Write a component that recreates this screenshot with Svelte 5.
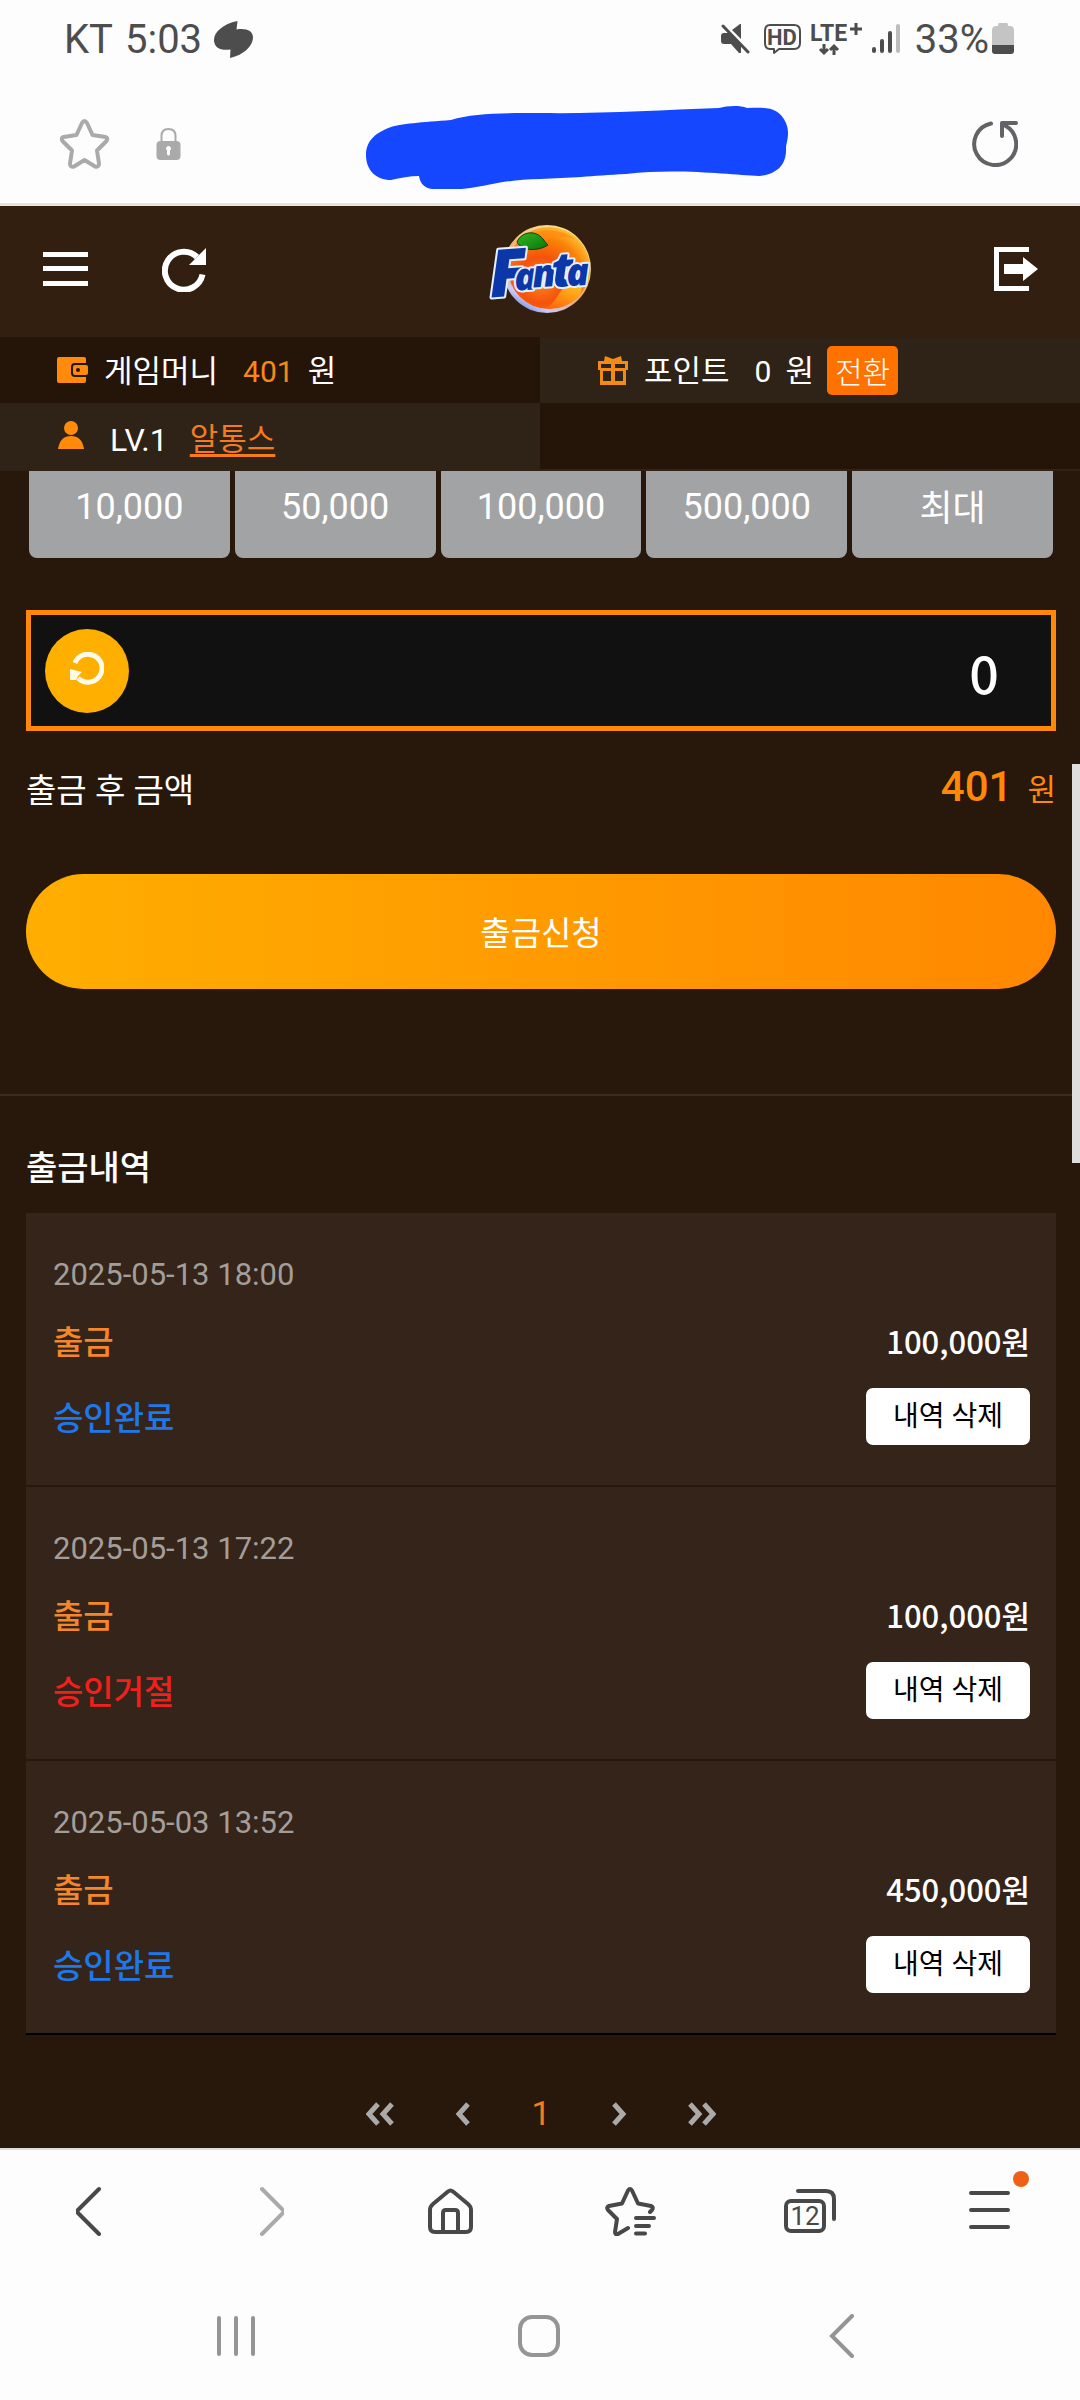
<script lang="ts">
  const amounts = ['10,000', '50,000', '100,000', '500,000', '최대'];
  const history = [
    { date: '2025-05-13 18:00', amount: '100,000원', status: '승인완료', ok: true },
    { date: '2025-05-13 17:22', amount: '100,000원', status: '승인거절', ok: false },
    { date: '2025-05-03 13:52', amount: '450,000원', status: '승인완료', ok: true }
  ];
  let amount = $state('0');
</script>

<div class="screen">
  <div class="status">
    <div class="status-left">
      <span>KT</span>
      <span>5:03</span>
      <svg width="40" height="38" viewBox="211 20 40 38" aria-hidden="true">
        <path fill="#4d4d4d" d="M234.500 21C220 24 211 32 211 40c0 8 7 11 16.500 9.500L227 58c14-3 23-12.500 23-20.500 0-7-7-9.500-16.500-8z" />
      </svg>
    </div>
    <div class="status-right">
      <svg class="mute" width="30" height="32" viewBox="720 23 30 32" aria-hidden="true">
        <path fill="#4d4d4d" d="M724 33h6l11 11v9h-2l-8-9h-7q-3 0-3-3v-5q0-3 3-3zM732 30l8-6h1v15z" />
        <path stroke="#4d4d4d" stroke-width="3" stroke-linecap="round" d="M723 26l25 26" />
      </svg>
      <svg width="38" height="32" viewBox="763 23 38 32" aria-hidden="true">
        <path fill="none" stroke="#4d4d4d" stroke-width="2" stroke-linejoin="round" d="M770 25h24q6 0 6 6v12q0 6-6 6h-15l-5 4v-4h-4q-5 0-5-6V31q0-6 5-6z" />
        <text x="782" y="45" text-anchor="middle" class="hd">HD</text>
      </svg>
      <svg width="54" height="52" viewBox="809 12 54 52" aria-hidden="true">
        <text x="810" y="40" class="lte">LTE</text>
        <path fill="none" stroke="#4d4d4d" stroke-width="3" d="M850 28h12M856 22v12" />
        <path fill="none" stroke="#4d4d4d" stroke-width="3" d="M824 43v9M820 48l4 4 4-4M834 54v-9M830 49l4-4 4 4" />
      </svg>
      <svg class="signal" width="30" height="32" viewBox="871 23 30 32" fill="none" stroke="#4d4d4d" stroke-width="4" stroke-linecap="round" aria-hidden="true">
        <path d="M874 49v2M882 41v10M890 33v18" />
        <path stroke="#bdbdbd" d="M898 26v25" />
      </svg>
      <span class="percent">33%</span>
      <svg width="22" height="32" viewBox="992 23 22 32" aria-hidden="true">
        <path fill="#c4c4c4" d="M999 23h8q1 0 1 3h3q3 1 3 4v16h-22V30q0-3 3-4h3q0-3 1-3z" />
        <path fill="#4d4d4d" d="M992 45h22v6q0 3-3 3h-16q-3 0-3-3z" />
      </svg>
    </div>
  </div>

  <div class="address">
    <div class="address-left">
      <button aria-label="즐겨찾기">
        <svg width="50" height="50" viewBox="60 119 50 50" fill="none" stroke="#aaa" stroke-width="4" stroke-linejoin="round">
          <path d="M82 123q2.500-4 5 0l5.500 12 13 2q3 1 1 4l-9.500 9.500 2 13q0 4-4 3L84.500 160 74 166.500q-4 1-4-3l2-13-9.500-9.500q-2-3 1-4l13-2z" />
        </svg>
      </button>
      <svg width="25" height="34" viewBox="156 126 25 34" aria-hidden="true">
        <path fill="none" stroke="#aaa" stroke-width="2" d="M161.500 142v-7q0-7 7-7t7 7v7" />
        <rect x="156.500" y="140" width="24" height="19" rx="4" fill="#aaa" />
        <path fill="#fff" d="M168.500 145a2.500 2.500 0 0 1 1.500 4.500v4q-1.500 2-3 0v-4a2.500 2.500 0 0 1 1.500-4.500z" />
      </svg>
    </div>
    <svg width="424" height="96" viewBox="365 96 424 96" aria-hidden="true">
      <path fill="#1447ff" d="M366 155c0-15 11-23 25-28 8-3 32-5 60-7 22-7 50-7 89-7 60 1 120-3 179-5 8-2 20-3 28 0 22-1 32 0 39 15 4 10 1 17 0 24 1 18-9 27-27 29-28-1-80-8-133-2-35 2-56 4-86 5-36 0-58 9-79 10h-29c-8-1-12-6-13-13-9 0-19 2-28 4-15 0-25-10-25-25z" />
    </svg>
    <button aria-label="새로고침">
      <svg width="46" height="46" viewBox="972 121 46 46" fill="none" stroke="#626366" stroke-width="4" stroke-linecap="round" stroke-linejoin="round">
        <path d="M991 123.500A21 21 0 1 0 1005 125.500M1016 123h-14v13" />
      </svg>
    </button>
  </div>

  <header class="site-header">
    <div class="header-left">
      <button aria-label="메뉴">
        <svg width="45" height="34" viewBox="0 0 45 34" fill="#fff"><path d="M0 0h45v5H0zM0 14h45v5H0zM0 29h45v5H0z" /></svg>
      </button>
      <button aria-label="페이지 새로고침">
        <svg width="45" height="45" viewBox="162 246 45 45">
          <path fill="none" stroke="#fff" stroke-width="6" d="M202.500 273.500A19 19 0 1 1 197 256" />
          <path fill="#fff" d="M206 247v17h-17z" />
        </svg>
      </button>
    </div>
    <a href="#home" aria-label="Fanta">
      <svg class="logo" width="104" height="92" viewBox="19 14 104 92">
        <defs>
          <radialGradient id="orange" cx="0.400" cy="0.650" r="0.700">
            <stop offset="0" stop-color="#ff8a1e" />
            <stop offset="0.400" stop-color="#f4520c" />
            <stop offset="0.750" stop-color="#fb8407" />
            <stop offset="1" stop-color="#ffc63a" />
          </radialGradient>
          <linearGradient id="rim" x1="0.800" y1="0" x2="0.200" y2="1">
            <stop offset="0" stop-color="#ffe9a0" />
            <stop offset="0.600" stop-color="#f0a56a" />
            <stop offset="0.850" stop-color="#c9ccf5" />
            <stop offset="1" stop-color="#5c74dc" />
          </linearGradient>
          <linearGradient id="leaf" x1="0" y1="0" x2="1" y2="1">
            <stop offset="0" stop-color="#35b51c" />
            <stop offset="1" stop-color="#06760c" />
          </linearGradient>
          <linearGradient id="drop" x1="0.800" y1="0" x2="0.200" y2="1">
            <stop offset="0" stop-color="#ffc21c" />
            <stop offset="1" stop-color="#ff6a0c" />
          </linearGradient>
        </defs>
        <ellipse cx="77" cy="60" rx="44" ry="44" fill="url(#rim)" />
        <ellipse cx="79" cy="59" rx="41" ry="41" fill="url(#orange)" />
        <path d="M50 32c12-12 38-15 55-2-14-4-26-3-34 4-8 3-16 2-21-2z" fill="#ff8a10" opacity="0.700" />
        <path d="M76 99c11-4 13-22 25-25 10-2 14 6 7 14-8 8-20 12-32 11z" fill="url(#drop)" />
        <path d="M47 33c4-10 18-13 26-3 2 3 4 5 5 6-9 6-26 7-31-3z" fill="url(#leaf)" stroke="#14380c" stroke-width="1" />
        <g class="wordmark" transform="rotate(-4 70 65)">
          <text x="19" y="85" class="cap">F</text>
          <text x="44" y="80" class="mid">a</text>
          <text x="62" y="78" class="mid">n</text>
          <text x="82" y="79" class="tee">t</text>
          <text x="96" y="79" class="mid">a</text>
        </g>
      </svg>
    </a>
    <button class="logout" aria-label="로그아웃">
      <svg width="44" height="44" viewBox="0 0 44 44" fill="#fff">
        <path d="M0 0h35v5H5v34h30v5H0zM10 17h19v-7l15 12-15 12v-7H10z" />
      </svg>
    </button>
  </header>

  <section class="info">
    <div class="cell dark">
      <svg width="31" height="26" viewBox="0 0 31 26" aria-hidden="true">
        <path fill="#ff8a0c" d="M2 0h25q2 0 2 2v4H18q-4 0-4 4v6q0 4 4 4h11v4q0 2-2 2H2q-2 0-2-2V2q0-2 2-2z" />
        <path fill="#ff8a0c" d="M18 8h11q2 0 2 2v6q0 2-2 2H18q-2 0-2-2v-6q0-2 2-2z" />
        <circle cx="21" cy="13" r="2" fill="#251509" />
      </svg>
      <span class="label">게임머니</span>
      <span class="value orange">401</span>
      <span>원</span>
    </div>
    <div class="cell light">
      <svg width="30" height="29" viewBox="0 0 30 29" aria-hidden="true">
        <path fill="#f28a18" fill-rule="evenodd" d="M7 0l8 3 8-3 1 5h6v9h-2v15H2V14H0V5h6zM3 8v4h10V8zM17 8v4h10V8zM5 15v10h8V15zM17 15v10h8V15z" />
      </svg>
      <span class="label">포인트</span>
      <span class="value">0</span>
      <span>원</span>
      <button class="convert">전환</button>
    </div>
    <div class="cell light member">
      <svg width="31" height="32" viewBox="0 0 31 32" fill="#ff8a0c" aria-hidden="true">
        <circle cx="14" cy="7" r="7" /><path d="M1 28q2-13 13-13t13 13z" />
      </svg>
      <span class="level">LV.1</span>
      <a class="user" href="#profile">알통스</a>
    </div>
    <div class="cell dark empty"></div>
  </section>

  <main>
    <div class="amounts">
      {#each amounts as a}
        <button>{a}</button>
      {/each}
    </div>

    <div class="entry">
      <button class="reset" aria-label="초기화">
        <svg width="34" height="34" viewBox="0 0 34 34">
          <path fill="none" stroke="#fffbe8" stroke-width="5" d="M5 11A14 14 0 1 1 8 26" />
          <path fill="#fffbe8" d="M0 17l12 3-4 4-2 4H0z" />
        </svg>
      </button>
      <input type="text" inputmode="numeric" aria-label="출금 금액" bind:value={amount} />
    </div>

    <div class="after">
      <span class="after-label">출금 후 금액</span>
      <span class="after-value"><strong>401</strong><span>원</span></span>
    </div>

    <button class="submit">출금신청</button>

    <hr />

    <h2>출금내역</h2>
    <ul class="history">
      {#each history as h}
        <li>
          <time>{h.date}</time>
          <div class="row kind"><span class="type">출금</span><span class="sum">{h.amount}</span></div>
          <div class="row state">
            <span class={h.ok ? 'done' : 'denied'}>{h.status}</span>
            <button>내역 삭제</button>
          </div>
        </li>
      {/each}
    </ul>

    <nav class="pages" aria-label="페이지">
      <button aria-label="처음">
        <svg width="29" height="24" viewBox="0 0 29 24"><path d="M12 2L3 12l9 10M26 2l-9 10 9 10" /></svg>
      </button>
      <button aria-label="이전">
        <svg width="16" height="24" viewBox="0 0 16 24"><path d="M13 2L4 12l9 10" /></svg>
      </button>
      <a href="#page-1" aria-current="page">1</a>
      <button aria-label="다음">
        <svg width="16" height="24" viewBox="0 0 16 24"><path d="M3 2l9 10-9 10" /></svg>
      </button>
      <button aria-label="마지막">
        <svg width="29" height="24" viewBox="0 0 29 24"><path d="M3 2l9 10-9 10M17 2l9 10-9 10" /></svg>
      </button>
    </nav>
    <div class="scrollbar"></div>
  </main>

  <nav class="browser-bar" aria-label="브라우저">
    <button aria-label="뒤로">
      <svg width="28" height="50" viewBox="76 2186 28 50"><path d="M99 2189l-21 21q-1.500 1.500 0 3l21 21" /></svg>
    </button>
    <button aria-label="앞으로" class="faded">
      <svg width="28" height="50" viewBox="256 2186 28 50"><path d="M262 2189l21 21q1.500 1.500 0 3l-21 21" /></svg>
    </button>
    <button aria-label="홈">
      <svg width="46" height="50" viewBox="427 2186 46 50">
        <path d="M448 2191.500q2.500-2 5 0l15 12.500q3 2.500 3 6v17q0 5-5 5h-31q-5 0-5-5v-17q0-3.500 3-6zM443 2231v-18q0-3 3-3h9q3 0 3 3v18" />
      </svg>
    </button>
    <button aria-label="북마크">
      <svg width="52" height="50" viewBox="604 2186 52 50">
        <path d="M628 2190.500q2-3 4 0l6 13 13 2.500q3 1 1 4l-2 2M628 2190.500l-6 13-13 2.500q-3 1-1 4l9 9-2 13q0 3 3 2l10-6M636 2218h18M636 2226h13M636 2233.500h9" />
      </svg>
    </button>
    <button aria-label="탭 12개">
      <svg width="54" height="50" viewBox="783 2186 54 50">
        <rect x="786" y="2201" width="38" height="30" rx="5" />
        <path d="M798 2191h28q8 0 8 8v20" />
        <text x="805" y="2225" text-anchor="middle">12</text>
      </svg>
    </button>
    <button aria-label="메뉴" class="more">
      <svg width="44" height="50" viewBox="968 2186 44 50"><path d="M971 2193h37M971 2210h37M971 2227h37" /></svg>
      <span class="dot"></span>
    </button>
  </nav>

  <nav class="system-bar" aria-label="시스템">
    <button aria-label="최근 앱"><svg width="42" height="44" viewBox="0 0 42 44"><path d="M4 4v36M21 4v36M38 4v36" /></svg></button>
    <button aria-label="홈 화면"><svg width="44" height="44" viewBox="0 0 44 44"><rect x="3" y="3" width="38" height="38" rx="12" /></svg></button>
    <button aria-label="뒤로 가기"><svg width="26" height="44" viewBox="0 0 26 44"><path d="M23 2L3 22l20 20" /></svg></button>
  </nav>
</div>

<style>
  :global(body) { margin: 0; background: #fdfdfd; }
  .screen { font-family: Roboto, "Noto Sans CJK KR", sans-serif; background: #fdfdfd; color: #fff; font-size: 30px; }
  svg { display: block; flex: none; }
  button { border: 0; padding: 0; margin: 0; background: none; color: inherit; font: inherit; cursor: pointer; }
  a { color: inherit; }

  .status { display: flex; justify-content: space-between; align-items: center; height: 78px; padding: 0 66px 0 64px; color: #4d4d4d; font-size: 40px; }
  .status-left, .status-right { display: flex; align-items: center; }
  .status-left { gap: 12px; }
  .status-right { gap: 8px; }
  .mute { margin-right: 5px; }
  .signal { margin-right: 6px; }
  .percent { margin-right: -5px; }
  .hd { font-size: 22px; font-weight: 700; fill: #4d4d4d; }
  .lte { font-size: 23px; font-weight: 700; fill: #4d4d4d; }

  .address { display: flex; justify-content: space-between; align-items: center; height: 125px; box-sizing: border-box; padding: 6px 62px 0 60px; }
  .address-left { display: flex; align-items: center; gap: 46px; }

  .site-header { display: grid; grid-template-columns: 1fr auto 1fr; align-items: center; height: 126px; padding: 0 42px 5px 43px; background: #321f0f; border-top: 3px solid #e5e4e1; }
  .header-left { display: flex; align-items: center; gap: 74px; }
  .logout { justify-self: end; }
  .logo { overflow: visible; }
  .wordmark { font-family: "Open Sans", sans-serif; font-weight: 800; font-style: italic; fill: #0b37a8; stroke: #e4efff; stroke-width: 4px; stroke-linejoin: round; paint-order: stroke; }
  .cap { font-size: 66px; }
  .mid { font-size: 38px; }
  .tee { font-size: 48px; }

  .info { display: grid; grid-template-columns: 1fr 1fr; font-size: 31px; line-height: 40px; }
  .cell { display: flex; align-items: center; height: 66px; padding-left: 57px; }
  .cell:nth-child(n + 3) { height: 68px; }
  .cell:nth-child(even) { padding-left: 58px; }
  .cell > span { padding-top: 4px; }
  .dark { background: #251509; }
  .light { background: #2f2217; }
  .empty { box-sizing: border-box; border-bottom: 2px solid #2f2217; }
  .label { margin-left: 16px; }
  .value { margin: 0 14px 0 25px; font-size: 30px; }
  .orange { color: #f78a17; }
  .member > .level, .user { padding-top: 6px; }
  .level { margin: 0 22px 0 22px; font-size: 32px; }
  .user { color: #f57b1c; text-decoration-thickness: 3px; text-underline-offset: 4px; }
  .convert { margin-left: 13px; padding: 0 8px; line-height: 49px; border-radius: 5px; background: #ff7200; font-size: 30px; font-family: "Noto Sans CJK KR", sans-serif; font-weight: 300; }

  main { position: relative; padding: 0 24px 0 26px; background: #27180b; }
  .amounts { display: grid; grid-template-columns: repeat(5, 1fr); gap: 5px; padding: 0 3px; }
  .amounts button { height: 87px; padding-bottom: 16px; border-radius: 0 0 8px 8px; background: #a2a3a4; font-size: 36px; }
  .amounts button:last-child { padding-bottom: 20px; }

  .entry { display: flex; align-items: center; margin-top: 52px; height: 121px; box-sizing: border-box; border: 5px solid #ff8808; background: #111; }
  .reset { display: grid; place-items: center; width: 84px; height: 84px; margin-left: 14px; border-radius: 50%; background: #ffaf00; flex: none; padding-bottom: 4px; box-sizing: border-box; }
  .entry input { flex: 1; min-width: 0; height: 100%; box-sizing: border-box; padding: 2px 52px 0 0; border: 0; outline: 0; background: none; color: #fff; font: 500 52px "Noto Sans CJK KR", sans-serif; text-align: right; }

  .after { display: flex; justify-content: space-between; align-items: center; height: 60px; margin-top: 26px; font-size: 33px; }
  .after-label { padding-top: 2px; }
  .after-value { display: flex; align-items: baseline; gap: 15px; color: #ff8808; font-size: 31px; padding-bottom: 2px; }
  .after-value strong { font-size: 42px; font-weight: 500; }

  .submit { display: block; width: 100%; height: 115px; margin-top: 57px; padding-bottom: 2px; border-radius: 58px; background: linear-gradient(90deg, #ffae00, #ff8800); font-size: 33px; }
  hr { height: 2px; margin: 105px -16px 0 -26px; border: 0; background: #3b2a20; }
  h2 { margin: 47px 0 20px; font-size: 34px; line-height: 50px; font-weight: 500; }

  .history { margin: 0; padding: 0; list-style: none; }
  .history li { padding: 40px 26px 40px 27px; background: #342419; border-bottom: 2px solid #27180b; }
  .history li:last-child { border-bottom-color: #000; }
  time { display: block; font-size: 31px; line-height: 44px; color: #a39e99; }
  .row { display: flex; justify-content: space-between; align-items: center; font-size: 33px; font-weight: 500; }
  .kind { height: 46px; margin-top: 20px; }
  .state { height: 57px; margin-top: 25px; }
  .type { color: #f5872a; }
  .sum { font-family: "Noto Sans CJK KR", sans-serif; font-size: 31px; }
  .done, .denied { padding-bottom: 2px; }
  .done { color: #1f78e8; }
  .denied { color: #f0201c; }
  .state button { height: 57px; padding: 0 27px 6px; border-radius: 7px; background: #fff; color: #000; font-size: 28px; font-weight: 400; }

  .pages { display: flex; justify-content: center; align-items: center; gap: 60px; height: 68px; margin-top: 45px; }
  .pages path { fill: none; stroke: #aaa; stroke-width: 5px; }
  .pages a { padding-bottom: 2px; color: #f57b1c; font-size: 34px; text-decoration: none; }
  .scrollbar { position: absolute; top: 293px; right: 0; width: 8px; height: 399px; background: #dfdddd; }

  .browser-bar { display: grid; grid-template-columns: repeat(6, 1fr); height: 122px; border-top: 2px solid #dedcdc; }
  .browser-bar button { display: grid; place-items: center; position: relative; }
  .browser-bar path, .browser-bar rect { fill: none; stroke: #484848; stroke-width: 4px; stroke-linecap: round; stroke-linejoin: round; }
  .browser-bar .faded path { stroke: #aaa; }
  .browser-bar text { font-size: 26px; fill: #484848; }
  .dot { position: absolute; top: 21px; left: 113px; width: 16px; height: 16px; border-radius: 50%; background: #ef5f17; }

  .system-bar { display: grid; grid-template-columns: repeat(3, 1fr); height: 128px; padding: 0 87px 0 84px; }
  .system-bar button { display: grid; place-items: center; }
  .system-bar path, .system-bar rect { fill: none; stroke: #959595; stroke-width: 4px; stroke-linecap: round; }
</style>
